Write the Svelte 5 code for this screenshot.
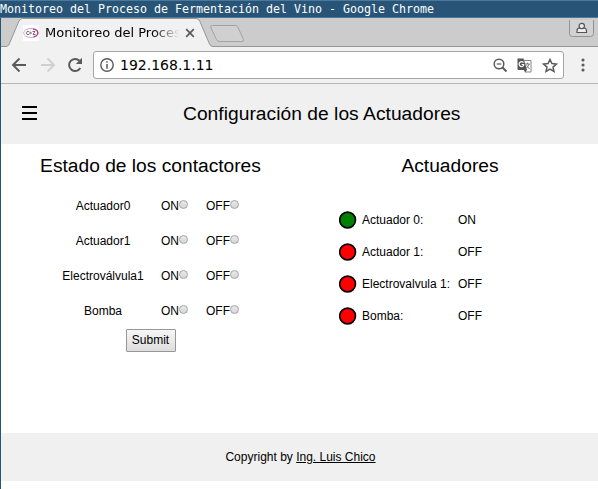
<script>
  const contactors = ['Actuador0', 'Actuador1', 'Electroválvula1', 'Bomba'];
  const actuators = [
    { name: 'Actuador 0:', on: true },
    { name: 'Actuador 1:', on: false },
    { name: 'Electrovalvula 1:', on: false },
    { name: 'Bomba:', on: false }
  ];
</script>

<div class="window">
  <div class="titlebar">Monitoreo del Proceso de Fermentación del Vino - Google Chrome</div>
  <div class="browser">
    <div class="tabs">
      <svg class="shapes" width="597" height="29" viewBox="0 0 597 29">
        <path d="M0 28.5H5Q7 28.5 8 26.500L18 3Q19.200.5 21.500.5H195Q197.500.5 198.700 3L208.500 26Q209.500 28.500 212 28.500H597V29H0Z" fill="#f1f1f1" />
        <path d="M0 28.500H5Q7 28.500 8 26.500L18 3Q19.200.5 21.500.5H195Q197.500.5 198.700 3L208.500 26Q209.500 28.500 212 28.500H597" fill="none" stroke="#969696" />
        <path d="M211.500 7.500H234Q236 7.500 237 9.500L242.500 21.500Q243.300 23.500 241 23.500H219Q216.500 23.500 215.500 21.500L209.800 9.500Q209 7.500 211.500 7.500Z" fill="#d0d0d0" stroke="#a2a2a2" />
      </svg>
      <div class="tab">
        <svg class="favicon" width="16" height="16" viewBox="0 0 16 16">
          <rect width="16" height="16" fill="#fff" />
          <ellipse cx="8" cy="8" rx="7.300" ry="4.500" fill="#fff" stroke="#d9a0bd" />
          <path d="M10 4.200C16 4.500 16.500 10.500 10.500 11.800" fill="none" stroke="#b83d83" stroke-width="1.300" />
          <path d="M6 6.500Q3.500 5.500 3.500 8T6 9.500M7 6.500V9.500M7 8H9M9.500 6.500H12L10 9.500H12.500" fill="none" stroke="#56485a" stroke-width=".8" />
        </svg>
        <span class="tabname">Monitoreo del Proces</span>
        <svg class="close" width="10" height="10" viewBox="0 0 10 10"><path d="M1.200 1.200L8.800 8.800M8.800 1.200L1.200 8.800" stroke="#5a5a5a" stroke-width="1.700" /></svg>
      </div>
      <svg class="profile" width="25" height="18" viewBox="0 0 25 18">
        <path d="M.5 0V13.500Q.5 16.500 3.500 16.500H21.500Q24.500 16.500 24.500 13.500V0" fill="#d2d2d2" stroke="#929292" />
        <path d="M8 12.500V10.800Q8 8 11 8H14.500Q17.500 8 17.500 10.800V12.500Z" fill="#eee" stroke="#555" stroke-width="1.200" />
        <circle cx="12.750" cy="6" r="2.700" fill="#eee" stroke="#555" stroke-width="1.200" />
      </svg>
    </div>
    <div class="toolbar">
      <svg class="back" width="16" height="16" viewBox="0 0 16 16"><path d="M15 8H2.500M8.500 1.500L2 8L8.500 14.500" fill="none" stroke="#5a5a5a" stroke-width="1.900" /></svg>
      <svg class="fwd" width="16" height="16" viewBox="0 0 16 16"><path d="M1 8H13.500M7.500 1.500L14 8L7.500 14.500" fill="none" stroke="#d0d0d0" stroke-width="1.900" /></svg>
      <svg class="reload" width="16" height="16" viewBox="0 0 16 16"><path d="M13.300 11A6 6 0 1 1 12.400 3.800" fill="none" stroke="#5a5a5a" stroke-width="2" /><path d="M15 .8V7H8.800Z" fill="#5a5a5a" /></svg>
      <div class="address">
        <svg width="14" height="14" viewBox="0 0 14 14"><circle cx="7" cy="7" r="6.200" fill="none" stroke="#5a5a5a" stroke-width="1.400" /><path d="M7 3.200V4.700M7 6V10.800" stroke="#5a5a5a" stroke-width="1.500" /></svg>
        <span class="url">192.168.1.11</span>
        <svg class="zoom" width="15" height="15" viewBox="0 0 15 15"><circle cx="6" cy="6" r="4.800" fill="none" stroke="#5a5a5a" stroke-width="1.500" /><path d="M9.500 9.500L13.500 13.500" stroke="#5a5a5a" stroke-width="2" /><path d="M3.700 6H8.300" stroke="#5a5a5a" stroke-width="1.200" /></svg>
        <svg class="translate" width="15" height="15" viewBox="0 0 15 15">
          <path d="M7 2.500H14V14H8" fill="#fff" stroke="#888" />
          <path d="M.5.500H6.500L10 12H1.500Q.5 12 .5 11Z" fill="#555" />
          <path d="M6.500 4.500Q4.500 2.700 2.800 4.500T3.500 8.500Q6.500 9 6.700 6.500H4.700" fill="none" stroke="#fff" stroke-width="1.200" />
          <path d="M8 6H13M10.500 4.700V6M12 6Q11 9.500 8.800 10.500M9.500 7.500L12.500 11" fill="none" stroke="#777" />
          <path d="M7 12H10L8 14.500Z" fill="#555" />
        </svg>
        <svg class="star" width="16" height="15" viewBox="0 0 16 15"><path d="M8 1.500L9.900 5.600L14.400 6.100L11 9.100L12 13.500L8 11.200L4 13.500L5 9.100L1.600 6.100L6.100 5.600Z" fill="none" stroke="#5a5a5a" stroke-width="1.500" /></svg>
      </div>
      <svg class="menu" width="4" height="14" viewBox="0 0 4 14"><g fill="#5a5a5a"><circle cx="2" cy="2" r="1.550" /><circle cx="2" cy="7" r="1.550" /><circle cx="2" cy="12" r="1.550" /></g></svg>
    </div>
    <div class="page">
      <header>
        <svg class="burger" width="15" height="14" viewBox="0 0 15 14"><path d="M0 1H15M0 7H15M0 13H15" stroke="#000" stroke-width="2" /></svg>
        <h1>Configuración de los Actuadores</h1>
      </header>
      <main>
        <section class="left">
          <h2>Estado de los contactores</h2>
          <form onsubmit={(e) => e.preventDefault()}>
            {#each contactors as name}
              <div class="row">
                <span class="name">{name}</span>
                <label class="on">ON<input type="radio" name={name} value="on" /></label>
                <label>OFF<input type="radio" name={name} value="off" /></label>
              </div>
            {/each}
            <button>Submit</button>
          </form>
        </section>
        <section class="right">
          <h2>Actuadores</h2>
          <div class="states">
            {#each actuators as a}
              <div class="state">
                <svg class="lamp" width="18" height="18" viewBox="0 0 18 18"><circle cx="8.600" cy="9" r="7.900" fill={a.on ? 'green' : 'red'} stroke="#000" stroke-width="1.600" /></svg>
                <span class="label">{a.name}</span>
                <span>{a.on ? 'ON' : 'OFF'}</span>
              </div>
            {/each}
          </div>
        </section>
      </main>
      <footer>Copyright by&nbsp;<a href="#autor">Ing. Luis Chico</a></footer>
    </div>
  </div>
</div>

<style>
  :global(body) { margin: 0; }
  .window { width: 598px; height: 489px; overflow: hidden; background: #285577; }
  .window :global(*) { box-sizing: border-box; }
  .window svg { display: block; flex: none; }
  .titlebar {
    height: 18px; border-top: 1px solid #4c7899; border-bottom: 1px solid #4c7899;
    font: 11.63px/16px "DejaVu Sans Mono", monospace; color: #fff; white-space: pre;
  }
  .browser { margin-left: 1px; width: 597px; height: 471px; background: #fff; }
  .tabs { position: relative; height: 29px; background: #ccc; display: flex; justify-content: space-between; }
  .shapes { position: absolute; left: 0; top: 0; }
  .tab { position: relative; display: flex; align-items: center; padding-left: 22px; }
  .tabname {
    width: 134px; margin-left: 6px; white-space: nowrap;
    font: 13px/20px "DejaVu Sans", sans-serif; color: #000;
    -webkit-mask-image: linear-gradient(90deg, #000 108px, transparent 134px);
    mask-image: linear-gradient(90deg, #000 108px, transparent 134px);
  }
  .close { margin-left: 6px; }
  .profile { position: relative; margin: 2px 4px 0 0; }
  .toolbar {
    height: 37px; background: #f1f1f1; border-bottom: 1px solid #b6b6b6;
    display: flex; align-items: center; padding-left: 10px;
  }
  .fwd { margin-left: 13px; }
  .reload { margin-left: 11px; }
  .address {
    margin-left: 10px; width: 471px; height: 28px; border: 1px solid #a6a6a6; border-radius: 3px;
    background: #fff; display: flex; align-items: center; padding: 0 5px 0 6px;
  }
  .url { flex: 1; margin-left: 6px; font: 14px/20px "DejaVu Sans", sans-serif; color: #000; }
  .translate { margin-left: 9px; }
  .star { margin-left: 10px; }
  .menu { margin-left: 16.5px; }
  .page { font: 12px/14px "Liberation Sans", Arial, sans-serif; color: #000; }
  header { height: 60px; background: #f0f0f0; display: flex; align-items: center; }
  .burger { margin: -2px 0 0 21px; }
  h1, h2 { margin: 0; font-size: 19.2px; font-weight: 400; line-height: 22px; white-space: nowrap; }
  h1 { margin-left: 146px; letter-spacing: .04px; }
  main { height: 289px; display: flex; }
  section { width: 299px; padding-top: 11px; }
  .left h2, .right h2 { text-align: center; }
  .right h2 { padding-left: 2px; }
  form { padding-top: 11px; display: flex; flex-direction: column; align-items: center; }
  .row { width: 299px; height: 35px; padding-left: 54px; display: flex; align-items: center; }
  .name { width: 96px; text-align: center; }
  label { display: flex; align-items: center; }
  .on { width: 45px; margin-left: 10px; }
  input {
    appearance: none; width: 9px; height: 9px; margin: -3px 0 0; border: 1px solid #a4a4a4;
    border-radius: 50%; background: linear-gradient(#e9e9e9, #d6d6d6);
  }
  button {
    width: 50px; height: 23px; margin-top: 1px; padding: 0 0 1px; border: 1px solid #979797; border-radius: 1px;
    background: linear-gradient(#f6f6f6, #dedede); font: 12px/14px "Liberation Sans", Arial, sans-serif; color: #000;
  }
  .states { padding: 27px 0 0 39px; }
  .state { height: 32px; display: flex; align-items: center; }
  .label { width: 96px; margin-left: 5px; }
  footer { height: 48px; padding-left: 2px; background: #f0f0f0; display: flex; align-items: center; justify-content: center; }
  a { color: #000; text-decoration: underline; }
</style>
